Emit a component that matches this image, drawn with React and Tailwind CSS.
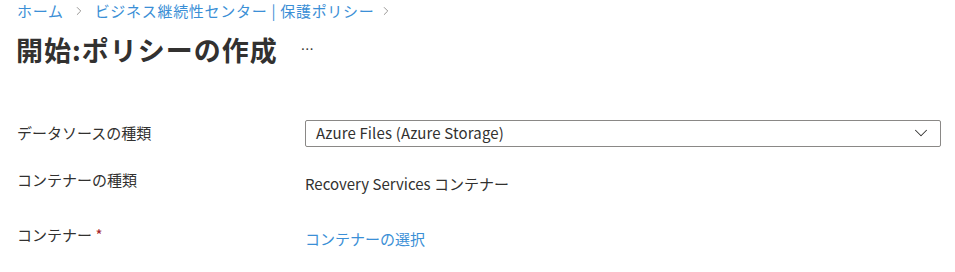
import { ChevronDown, ChevronRight } from "lucide-react";

const font = { fontFamily: '"Noto Sans CJK JP", "Noto Sans", sans-serif' };

export default function App() {
  return (
    <div className="w-[955px] h-[272px] bg-white text-[#323130]" style={font}>
      <div className="pl-[17px] flex items-center text-[15px] text-[#3b8fd6] h-[22px] tracking-[0.7px]">
        <span>ホーム</span>
        <ChevronRight className="w-[14px] h-[14px] ml-[8px] mr-[9px] text-[#8a8886]" strokeWidth={1.5} />
        <span>ビジネス継続性センター | 保護ポリシー</span>
        <ChevronRight className="w-[14px] h-[14px] mx-[5px] text-[#8a8886]" strokeWidth={1.5} />
      </div>
      <div className="pl-[16px] mt-[9px] flex items-center h-[36px]">
        <h1 className="text-[27px] font-bold text-[#323130] leading-none tracking-[1px]">開始:ポリシーの作成</h1>
        <span className="ml-[23px] text-[13px] text-[#323130]">…</span>
      </div>
      <div className="mt-[52px] pl-[17px] pr-[14px] flex flex-col text-[15px]">
        <div className="flex items-center h-[28px]">
          <div className="w-[288px]">データソースの種類</div>
          <div className="flex-1 h-[27px] border border-[#8a8886] rounded-[2px] flex items-center justify-between pl-[10px] pr-[8px]">
            <span className="tracking-[0.15px]">Azure Files (Azure Storage)</span>
            <ChevronDown className="w-[22px] h-[22px] text-[#323130]" strokeWidth={1.1} />
          </div>
        </div>
        <div className="flex items-start h-[55px] mt-[23px]">
          <div className="w-[288px] leading-[20px]">コンテナーの種類</div>
          <div className="leading-[20px] mt-[4px]">Recovery Services コンテナー</div>
        </div>
        <div className="flex items-start">
          <div className="w-[288px] leading-[20px]">
            コンテナー <span className="text-[#a4262c]">*</span>
          </div>
          <div className="leading-[20px] mt-[4px] text-[#3b8fd6]">コンテナーの選択</div>
        </div>
      </div>
    </div>
  );
}
